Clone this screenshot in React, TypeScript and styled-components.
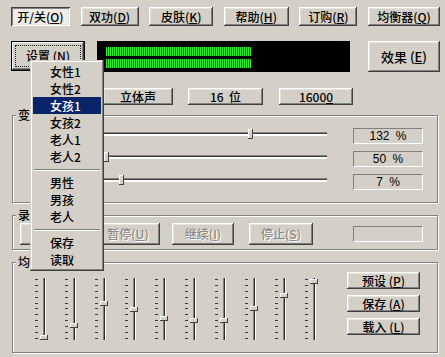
import React from 'react';
import styled, {createGlobalStyle, css} from 'styled-components';

const GlobalStyle = createGlobalStyle`
  html, body {
    margin: 0;
    padding: 0;
    background: #d4d0c8;
  }
  body {
    font-family: "Noto Sans CJK SC", "Liberation Sans", sans-serif;
    font-size: 12px;
    font-weight: 500;
    color: #000;
  }
`;

const raised = css`
  box-shadow:
    inset -1px -1px #404040,
    inset 1px 1px #ffffff,
    inset -2px -2px #808080,
    inset 2px 2px #e6e4de;
`;

const pressed = css`
  box-shadow:
    inset 1px 1px #404040,
    inset -1px -1px #ffffff,
    inset 2px 2px #808080,
    inset -2px -2px #e6e4de;
`;

const Window = styled.div`
  position: relative;
  width: 445px;
  height: 357px;
  box-sizing: border-box;
  padding: 7px 5px 0 11px;
  display: flex;
  flex-direction: column;
  background: #d4d0c8;
  overflow: hidden;
`;

const Row = styled.div<{$mt?: number; $h: number}>`
  display: flex;
  align-items: center;
  margin-top: ${(p) => p.$mt ?? 0}px;
  height: ${(p) => p.$h}px;
`;

const Toolbar = styled.div`
  display: flex;
  justify-content: space-between;
  height: 19px;
`;

const Button = styled.button<{
  $w: number;
  $h?: number;
  $ml?: number;
  $down?: boolean;
  $off?: boolean;
  $size?: number;
}>`
  flex: none;
  width: ${(p) => p.$w}px;
  height: ${(p) => p.$h ?? 19}px;
  margin: 0 0 0 ${(p) => p.$ml ?? 0}px;
  padding: 0;
  border: none;
  background: ${(p) => (p.$down ? '#eeede9' : '#d4d0c8')};
  ${(p) => (p.$down ? pressed : raised)};
  font-family: inherit;
  font-weight: inherit;
  font-size: ${(p) => p.$size ?? 12}px;
  line-height: 1;
  color: ${(p) => (p.$off ? '#8c8a86' : '#000')};
  text-shadow: ${(p) => (p.$off ? '1px 1px #ffffff' : 'none')};
  display: flex;
  align-items: center;
  justify-content: center;
  white-space: pre;
`;

const DefaultButton = styled.button`
  flex: none;
  width: 74px;
  height: 30px;
  padding: 4px;
  border: none;
  background: #d4d0c8;
  box-shadow:
    inset 0 0 0 1px #000,
    inset -2px -2px #404040,
    inset 2px 2px #ffffff,
    inset -3px -3px #808080;
  font-family: inherit;
  font-weight: inherit;
  font-size: 12px;
  display: flex;
`;

const FocusRing = styled.span`
  flex: 1;
  border: 1px dotted #202020;
  display: flex;
  align-items: center;
  justify-content: center;
  line-height: 1;
`;

const Meter = styled.div`
  flex: none;
  width: 253px;
  height: 31px;
  margin-left: 12px;
  box-sizing: border-box;
  padding: 6px 0 0 9px;
  background: #000;
  display: flex;
  flex-direction: column;
  gap: 3px;
`;

const MeterBar = styled.div<{$w: number}>`
  width: ${(p) => p.$w}px;
  height: 9px;
  background: repeating-linear-gradient(
    90deg,
    #2cf02c 0 1px,
    #0b6a0b 1px 2px
  );
`;

const Group = styled.fieldset<{$mt: number; $pad: string}>`
  margin: ${(p) => p.$mt}px 0 0 1px;
  width: 426px;
  min-width: 0;
  box-sizing: border-box;
  padding: ${(p) => p.$pad};
  border: 1px solid #808080;
  box-shadow: inset 1px 1px #ffffff, 1px 1px #ffffff;
`;

const Legend = styled.legend`
  margin-left: 3px;
  padding: 0 2px;
  font-size: 12px;
  line-height: 14px;
  background: #d4d0c8;
`;

const SliderGrid = styled.div`
  display: grid;
  grid-template-columns: 88px 226px 26px 70px;
  grid-auto-rows: 16px;
  row-gap: 7px;
`;

const HTrack = styled.div`
  grid-column: 2;
  position: relative;
  &::before {
    content: '';
    position: absolute;
    left: 0;
    right: 0;
    top: 4px;
    height: 1px;
    background: #808080;
    border-bottom: 1px solid #404040;
    box-shadow: 0 2px 0 #ffffff;
  }
`;

const HThumb = styled.div`
  position: absolute;
  top: 1px;
  width: 5px;
  height: 10px;
  background: #d4d0c8;
  box-shadow: inset -1px -1px #404040, inset 1px 1px #ffffff;
`;

const ValueBox = styled.div`
  grid-column: 4;
  box-sizing: border-box;
  border-top: 1px solid #808080;
  border-left: 1px solid #808080;
  border-bottom: 1px solid #ffffff;
  border-right: 1px solid #ffffff;
  font-family: "Liberation Sans", sans-serif;
  font-weight: 400;
  font-size: 12px;
  line-height: 14px;
  text-align: center;
  word-spacing: 3px;
`;

const RecordRow = styled.div`
  display: flex;
  align-items: center;
  padding-left: 7px;
  height: 22px;
`;

const EmptyBox = styled(ValueBox)`
  width: 70px;
  height: 16px;
  margin: 0 14px 0 auto;
`;

const EqBody = styled.div`
  display: flex;
  padding-left: 17px;
`;

const EqSliders = styled.div`
  display: flex;
  margin-top: 6px;
`;

const VSlider = styled.div`
  width: 30px;
  height: 62px;
  display: flex;
`;

const Ticks = styled.div`
  width: 3px;
  margin-left: 5px;
  padding: 1px 0;
  box-sizing: border-box;
  display: flex;
  flex-direction: column;
  justify-content: space-between;
`;

const Tick = styled.div`
  height: 1px;
  background: #3c3c3c;
`;

const VTrack = styled.div`
  position: relative;
  width: 1px;
  margin-left: 5px;
  background: #303030;
  border-left: 1px solid #808080;
  border-right: 1px solid #ffffff;
`;

const VThumb = styled.div`
  position: absolute;
  left: -4px;
  width: 8px;
  height: 5px;
  background: #d4d0c8;
  box-shadow: inset -1px -1px #404040, inset 1px 1px #ffffff;
`;

const EqButtons = styled.div`
  display: flex;
  flex-direction: column;
  gap: 6px;
  margin-left: 17px;
`;

const Menu = styled.div`
  position: absolute;
  left: 30px;
  top: 60px;
  width: 74px;
  box-sizing: border-box;
  padding: 3px;
  background: #d4d0c8;
  box-shadow:
    inset -1px -1px #404040,
    inset 1px 1px #d4d0c8,
    inset -2px -2px #808080,
    inset 2px 2px #ffffff;
  display: flex;
  flex-direction: column;
`;

const MenuItem = styled.div<{$active?: boolean}>`
  height: 17px;
  line-height: 17px;
  padding-left: 17px;
  font-size: 12px;
  background: ${(p) => (p.$active ? '#0a246a' : 'transparent')};
  color: ${(p) => (p.$active ? '#ffffff' : '#000')};
`;

const MenuSep = styled.div`
  height: 9px;
  display: flex;
  align-items: center;
  &::before {
    content: '';
    flex: 1;
    margin: 0 1px;
    height: 1px;
    background: #808080;
    border-bottom: 1px solid #ffffff;
  }
`;

const hSliders = [
  {pos: 147, value: '132 %'},
  {pos: 3, value: '50 %'},
  {pos: 18, value: '7 %'},
];

const eqThumbs = [57, 45, 23, 29, 38, 40, 40, 28, 15, 1];

const menu: (string | null)[] = [
  '女性1',
  '女性2',
  '女孩1',
  '女孩2',
  '老人1',
  '老人2',
  null,
  '男性',
  '男孩',
  '老人',
  null,
  '保存',
  '读取',
];

export default function App() {
  return (
    <>
      <GlobalStyle />
      <Window>
        <Toolbar>
          <Button $w={59} $down>
            开/关(<u>O</u>)
          </Button>
          <Button $w={58}>
            双功(<u>D</u>)
          </Button>
          <Button $w={64}>
            皮肤(<u>K</u>)
          </Button>
          <Button $w={65}>
            帮助(<u>H</u>)
          </Button>
          <Button $w={58}>
            订购(<u>R</u>)
          </Button>
          <Button $w={72}>
            均衡器(<u>Q</u>)
          </Button>
        </Toolbar>

        <Row $mt={14} $h={32}>
          <DefaultButton>
            <FocusRing>
              设置 (<u>N</u>)
            </FocusRing>
          </DefaultButton>
          <Meter>
            <MeterBar $w={145} />
            <MeterBar $w={145} />
          </Meter>
          <Button $w={72} $h={31} $ml={18} $size={13}>
            效果 (<u>E</u>)
          </Button>
        </Row>

        <Row $mt={16} $h={17}>
          <Button $w={70} $h={17} $ml={92}>
            立体声
          </Button>
          <Button $w={75} $h={17} $ml={15}>
            {'16  位'}
          </Button>
          <Button $w={74} $h={17} $ml={16}>
            1600<u>0</u>
          </Button>
        </Row>

        <Group $mt={3} $pad="6px 14px 12px 0">
          <Legend>变</Legend>
          <SliderGrid>
            {hSliders.map((s, i) => (
              <React.Fragment key={i}>
                <HTrack style={{gridRow: i + 1}}>
                  <HThumb style={{left: s.pos}} />
                </HTrack>
                <ValueBox style={{gridRow: i + 1}}>{s.value}</ValueBox>
              </React.Fragment>
            ))}
          </SliderGrid>
        </Group>

        <Group $mt={5} $pad="1px 0 4px 0">
          <Legend>录</Legend>
          <RecordRow>
            <Button $w={64} $h={22} aria-label="录音" />
            <Button $w={64} $h={22} $ml={12} $off>
              暂停(<u>U</u>)
            </Button>
            <Button $w={62} $h={22} $ml={12} $off>
              继续(<u>I</u>)
            </Button>
            <Button $w={64} $h={22} $ml={15} $off>
              停止(<u>S</u>)
            </Button>
            <EmptyBox />
          </RecordRow>
        </Group>

        <Group $mt={5} $pad="3px 0 12px 0">
          <Legend>均</Legend>
          <EqBody>
            <EqSliders>
              {eqThumbs.map((top, i) => (
                <VSlider key={i}>
                  <Ticks>
                    {Array.from({length: 11}, (_, t) => (
                      <Tick key={t} />
                    ))}
                  </Ticks>
                  <VTrack>
                    <VThumb style={{top}} />
                  </VTrack>
                </VSlider>
              ))}
            </EqSliders>
            <EqButtons>
              <Button $w={73} $h={17}>
                预设 (<u>P</u>)
              </Button>
              <Button $w={73} $h={17}>
                保存 (<u>A</u>)
              </Button>
              <Button $w={73} $h={17}>
                载入 (<u>L</u>)
              </Button>
            </EqButtons>
          </EqBody>
        </Group>

        <Menu>
          {menu.map((m, i) =>
            m === null ? (
              <MenuSep key={i} />
            ) : (
              <MenuItem key={i} $active={m === '女孩1'}>
                {m}
              </MenuItem>
            ),
          )}
        </Menu>
      </Window>
    </>
  );
}
